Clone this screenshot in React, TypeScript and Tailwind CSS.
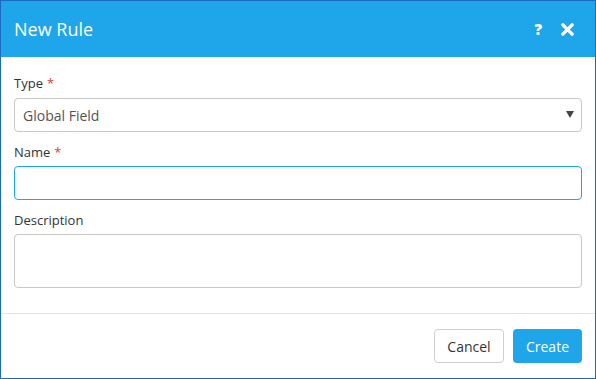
function Label({ text, required }: { text: string; required?: boolean }) {
  return (
    <label className="block text-[13px] leading-[18px] text-[#333]">
      {text}
      {required && <span className="ml-1 text-[#e53935]">*</span>}
    </label>
  );
}

export default function App() {
  return (
    <div className="h-[379px] w-[596px] bg-white font-['Open_Sans',sans-serif]">
      <div className="flex h-full flex-col border border-[#1a6bbf] bg-white">
        {/* Header */}
        <div className="flex h-[56px] items-center justify-between bg-[#1ea5ea] pl-[13px] pr-[21px]">
          <h1 className="text-[18px] font-normal text-white">New Rule</h1>
          <div className="flex items-center gap-[19px] text-white">
            <span className="text-[15px] font-extrabold leading-none">?</span>
            <svg width="13" height="13" viewBox="0 0 14 14">
              <path d="M2 2 L12 12 M12 2 L2 12" stroke="white" strokeWidth="3.6" strokeLinecap="round" />
            </svg>
          </div>
        </div>

        {/* Body */}
        <div className="flex flex-col px-[13px] pt-[17px]">
          <Label text="Type" required />
          <div className="relative mt-[6px] flex h-[34px] items-center rounded-[4px] border border-[#c8c8c8] px-[8px] text-[14px] text-[#555]">
            Global Field
            <span className="absolute right-[7px] top-[12px] h-0 w-0 border-x-[4px] border-t-[7px] border-x-transparent border-t-[#444]" />
          </div>

          <div className="mt-[11px]">
            <Label text="Name" required />
          </div>
          <div className="mt-[5px] h-[34px] rounded-[4px] border border-[#1ea5ea]" />

          <div className="mt-[11px]">
            <Label text="Description" />
          </div>
          <div className="mt-[5px] h-[54px] rounded-[4px] border border-[#c8c8c8]" />
        </div>

        {/* Footer */}
        <div className="mt-[25px] border-t border-[#e5e5e5]" />
        <div className="flex justify-end gap-[9px] px-[13px] pt-[15px]">
          <button className="h-[34px] w-[70px] rounded-[4px] border border-[#cfcfcf] bg-white text-[14px] text-[#333]">
            Cancel
          </button>
          <button className="h-[34px] w-[69px] rounded-[4px] bg-[#1ea5ea] text-[14px] text-white">
            Create
          </button>
        </div>
      </div>
    </div>
  );
}
